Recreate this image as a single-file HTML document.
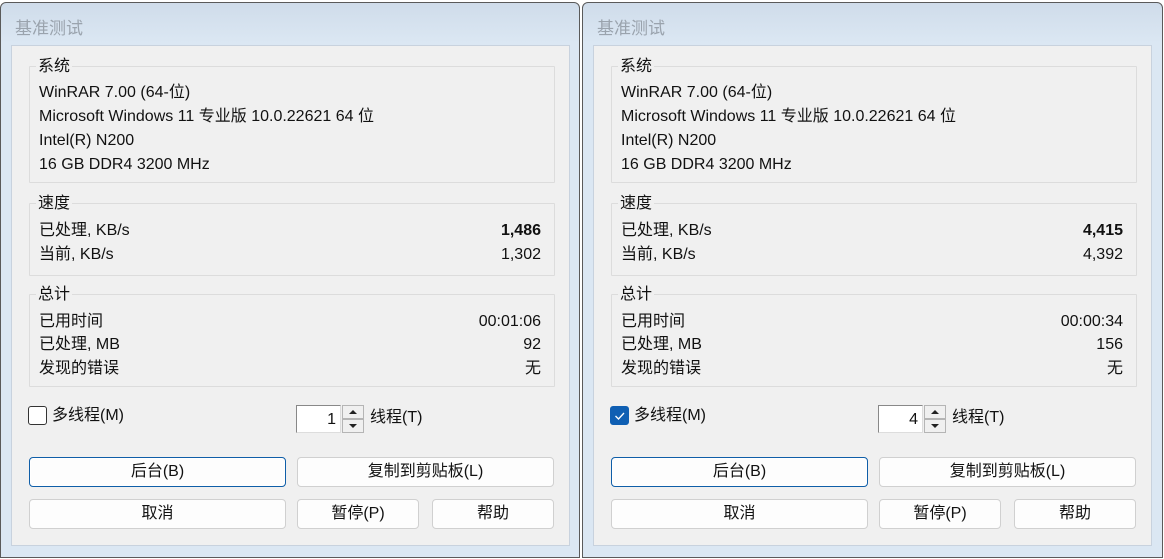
<!DOCTYPE html>
<html><head><meta charset="utf-8"><style>
*{box-sizing:border-box;margin:0;padding:0}
body{width:1164px;height:559px;background:#fff;position:relative;overflow:hidden;font-family:"Liberation Sans","Noto Sans CJK SC",sans-serif;font-size:16px;line-height:20px;color:#111}
.win{position:absolute;top:2px;width:580px;height:556px;border:1px solid #5a5a5a;border-radius:6px 6px 0 0;background:linear-gradient(#cfdcea,#dbe7f3 40px,#dbe7f3)}
.in{position:absolute;left:-1px;top:-3px;width:0;height:0}
.title{position:absolute;left:15px;top:19px;font-size:17px;color:#9aa3ad;white-space:nowrap}
.client{position:absolute;left:11px;top:45px;width:559px;height:501px;background:#f0f0f0;border:1px solid #c8d2de}
.a{position:absolute;white-space:nowrap;margin-top:2px}
.grp{position:absolute;border:1px solid #dcdcdc;border-radius:1px}
.gl{position:absolute;background:#f0f0f0;padding:0 2px;white-space:nowrap;margin-top:1px}
.r{position:absolute;white-space:nowrap;text-align:right;margin-top:2px}
.btn{position:absolute;background:#fdfdfd;border:1px solid #d0d0d0;border-radius:4px;text-align:center;line-height:28px}
.btn.def{border:1px solid #0f5ea8;box-shadow:inset 0 0 0 1px #fff}
.cb{position:absolute;width:19px;height:19px;border:1px solid #333;border-radius:3px;background:#fff}
.cb.on{background:#0f5fb3;border-color:#0f5fb3}
.edit{position:absolute;background:#fff;border:1px solid #888;border-right-color:#ddd;border-bottom-color:#ddd;text-align:right;padding-right:4px;line-height:27px}
.spin{position:absolute;width:22px;height:14px;background:#f0f0f0;border:1px solid #b5b5b5}
</style></head><body>

<div class="win" style="left:0"><div class="in">
<div class="title">基准测试</div>
<div class="client"></div>
<div class="grp" style="left:29px;top:66px;width:526px;height:117px"></div>
<div class="gl" style="left:36px;top:56px">系统</div>
<div class="a" style="left:39px;top:81px">WinRAR 7.00 (64-位)</div>
<div class="a" style="left:39px;top:105px">Microsoft Windows 11 专业版 10.0.22621 64 位</div>
<div class="a" style="left:39px;top:129px">Intel(R) N200</div>
<div class="a" style="left:39px;top:153px">16 GB DDR4 3200 MHz</div>
<div class="grp" style="left:29px;top:203px;width:526px;height:73px"></div>
<div class="gl" style="left:36px;top:193px">速度</div>
<div class="a" style="left:39px;top:219px">已处理, KB/s</div>
<div class="r" style="right:-541px;top:219px;font-weight:bold">1,486</div>
<div class="a" style="left:39px;top:243px">当前, KB/s</div>
<div class="r" style="right:-541px;top:243px">1,302</div>
<div class="grp" style="left:29px;top:294px;width:526px;height:93px"></div>
<div class="gl" style="left:36px;top:284px">总计</div>
<div class="a" style="left:39px;top:310px">已用时间</div>
<div class="r" style="right:-541px;top:310px">00:01:06</div>
<div class="a" style="left:39px;top:333px">已处理, MB</div>
<div class="r" style="right:-541px;top:333px">92</div>
<div class="a" style="left:39px;top:357px">发现的错误</div>
<div class="r" style="right:-541px;top:357px">无</div>
<div class="cb" style="left:28px;top:406px"></div>
<div class="a" style="left:52px;top:404px">多线程(M)</div>
<div class="edit" style="left:296px;top:405px;width:45px;height:28px">1</div>
<div class="spin" style="left:342px;top:405px"><svg width="20" height="12" style="display:block"><path d="M6 8h8L10 4z" fill="#222"/></svg></div>
<div class="spin" style="left:342px;top:419px"><svg width="20" height="12" style="display:block"><path d="M6 4h8L10 8z" fill="#222"/></svg></div>
<div class="a" style="left:370px;top:406px">线程(T)</div>
<div class="btn def" style="left:29px;top:457px;width:257px;height:30px">后台(B)</div>
<div class="btn" style="left:297px;top:457px;width:257px;height:30px">复制到剪贴板(L)</div>
<div class="btn" style="left:29px;top:499px;width:257px;height:30px">取消</div>
<div class="btn" style="left:297px;top:499px;width:122px;height:30px">暂停(P)</div>
<div class="btn" style="left:432px;top:499px;width:122px;height:30px">帮助</div>
</div></div>

<div class="win" style="left:582px;width:581px"><div class="in">
<div class="title">基准测试</div>
<div class="client"></div>
<div class="grp" style="left:29px;top:66px;width:526px;height:117px"></div>
<div class="gl" style="left:36px;top:56px">系统</div>
<div class="a" style="left:39px;top:81px">WinRAR 7.00 (64-位)</div>
<div class="a" style="left:39px;top:105px">Microsoft Windows 11 专业版 10.0.22621 64 位</div>
<div class="a" style="left:39px;top:129px">Intel(R) N200</div>
<div class="a" style="left:39px;top:153px">16 GB DDR4 3200 MHz</div>
<div class="grp" style="left:29px;top:203px;width:526px;height:73px"></div>
<div class="gl" style="left:36px;top:193px">速度</div>
<div class="a" style="left:39px;top:219px">已处理, KB/s</div>
<div class="r" style="right:-541px;top:219px;font-weight:bold">4,415</div>
<div class="a" style="left:39px;top:243px">当前, KB/s</div>
<div class="r" style="right:-541px;top:243px">4,392</div>
<div class="grp" style="left:29px;top:294px;width:526px;height:93px"></div>
<div class="gl" style="left:36px;top:284px">总计</div>
<div class="a" style="left:39px;top:310px">已用时间</div>
<div class="r" style="right:-541px;top:310px">00:00:34</div>
<div class="a" style="left:39px;top:333px">已处理, MB</div>
<div class="r" style="right:-541px;top:333px">156</div>
<div class="a" style="left:39px;top:357px">发现的错误</div>
<div class="r" style="right:-541px;top:357px">无</div>
<div class="cb on" style="left:28px;top:406px"><svg width="17" height="17" style="display:block"><path d="M4.5 9l3 3 5.5-6" stroke="#fff" stroke-width="1.3" fill="none"/></svg></div>
<div class="a" style="left:52px;top:404px">多线程(M)</div>
<div class="edit" style="left:296px;top:405px;width:45px;height:28px">4</div>
<div class="spin" style="left:342px;top:405px"><svg width="20" height="12" style="display:block"><path d="M6 8h8L10 4z" fill="#222"/></svg></div>
<div class="spin" style="left:342px;top:419px"><svg width="20" height="12" style="display:block"><path d="M6 4h8L10 8z" fill="#222"/></svg></div>
<div class="a" style="left:370px;top:406px">线程(T)</div>
<div class="btn def" style="left:29px;top:457px;width:257px;height:30px">后台(B)</div>
<div class="btn" style="left:297px;top:457px;width:257px;height:30px">复制到剪贴板(L)</div>
<div class="btn" style="left:29px;top:499px;width:257px;height:30px">取消</div>
<div class="btn" style="left:297px;top:499px;width:122px;height:30px">暂停(P)</div>
<div class="btn" style="left:432px;top:499px;width:122px;height:30px">帮助</div>
</div></div>
</body></html>
